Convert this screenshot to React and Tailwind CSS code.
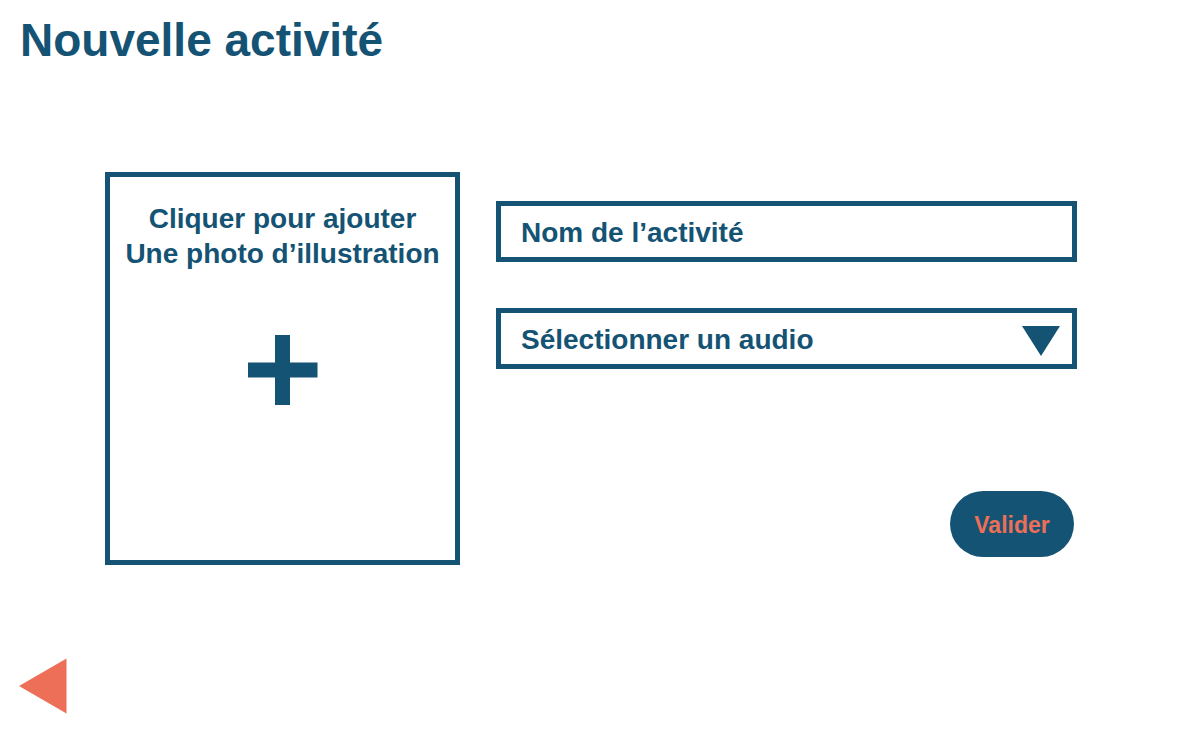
export default function App() {
  return (
    <main className="flex min-h-screen flex-col bg-white font-['Liberation_Sans',Arial,sans-serif] font-bold text-[#145374]">
      <h1 className="px-5 pt-3 text-[46px] leading-[56px]">Nouvelle activité</h1>

      <form className="mt-[104px] flex items-start gap-9 pr-[100px] pl-[105px]" onSubmit={(e) => e.preventDefault()}>
        <button
          type="button"
          className="flex h-[393px] w-[355px] shrink-0 flex-col items-center border-[5px] border-[#145374] pt-6 text-[28px] leading-[35px]"
        >
          <span className="whitespace-nowrap">Cliquer pour ajouter</span>
          <span className="whitespace-nowrap">Une photo d’illustration</span>
          <svg viewBox="0 0 70 70" className="mt-[64px] size-[70px] fill-current" aria-hidden="true">
            <path d="M27 0h15v27.5H69.5v15H42V70H27V42.5H-.5v-15H27z" />
          </svg>
        </button>

        <div className="flex min-w-0 flex-1 flex-col pt-[29px]">
          <input
            type="text"
            aria-label="Nom de l’activité"
            placeholder="Nom de l’activité"
            className="h-[61px] w-full border-[5px] border-[#145374] px-5 pt-[3px] text-[28px] outline-none placeholder:text-[#145374] placeholder:opacity-100"
          />
          <div className="relative mt-[46px]">
            <select
              aria-label="Sélectionner un audio"
              className="h-[61px] w-full appearance-none border-[5px] border-[#145374] bg-white pt-[3px] pr-16 pl-5 text-[28px] outline-none"
            >
              <option>Sélectionner un audio</option>
            </select>
            <svg viewBox="0 0 38 30" className="pointer-events-none absolute top-[18px] right-[17px] h-[30px] w-[38px] fill-current" aria-hidden="true">
              <path d="M0 0h38L19 30z" />
            </svg>
          </div>
          <button type="submit" className="mt-[122px] mr-[3px] h-[66px] w-[124px] self-end rounded-full bg-[#145374] pt-[2px] text-[23px] text-[#ee6f57]">
            Valider
          </button>
        </div>
      </form>

      <a href="#retour" aria-label="Retour" className="mt-auto mb-[21px] ml-[19px] block w-12 text-[#ee6f57]">
        <svg viewBox="0 0 48 56" className="h-14 w-12 fill-current" aria-hidden="true">
          <path d="M0 28 47.5 0.5v55z" />
        </svg>
      </a>
    </main>
  );
}
